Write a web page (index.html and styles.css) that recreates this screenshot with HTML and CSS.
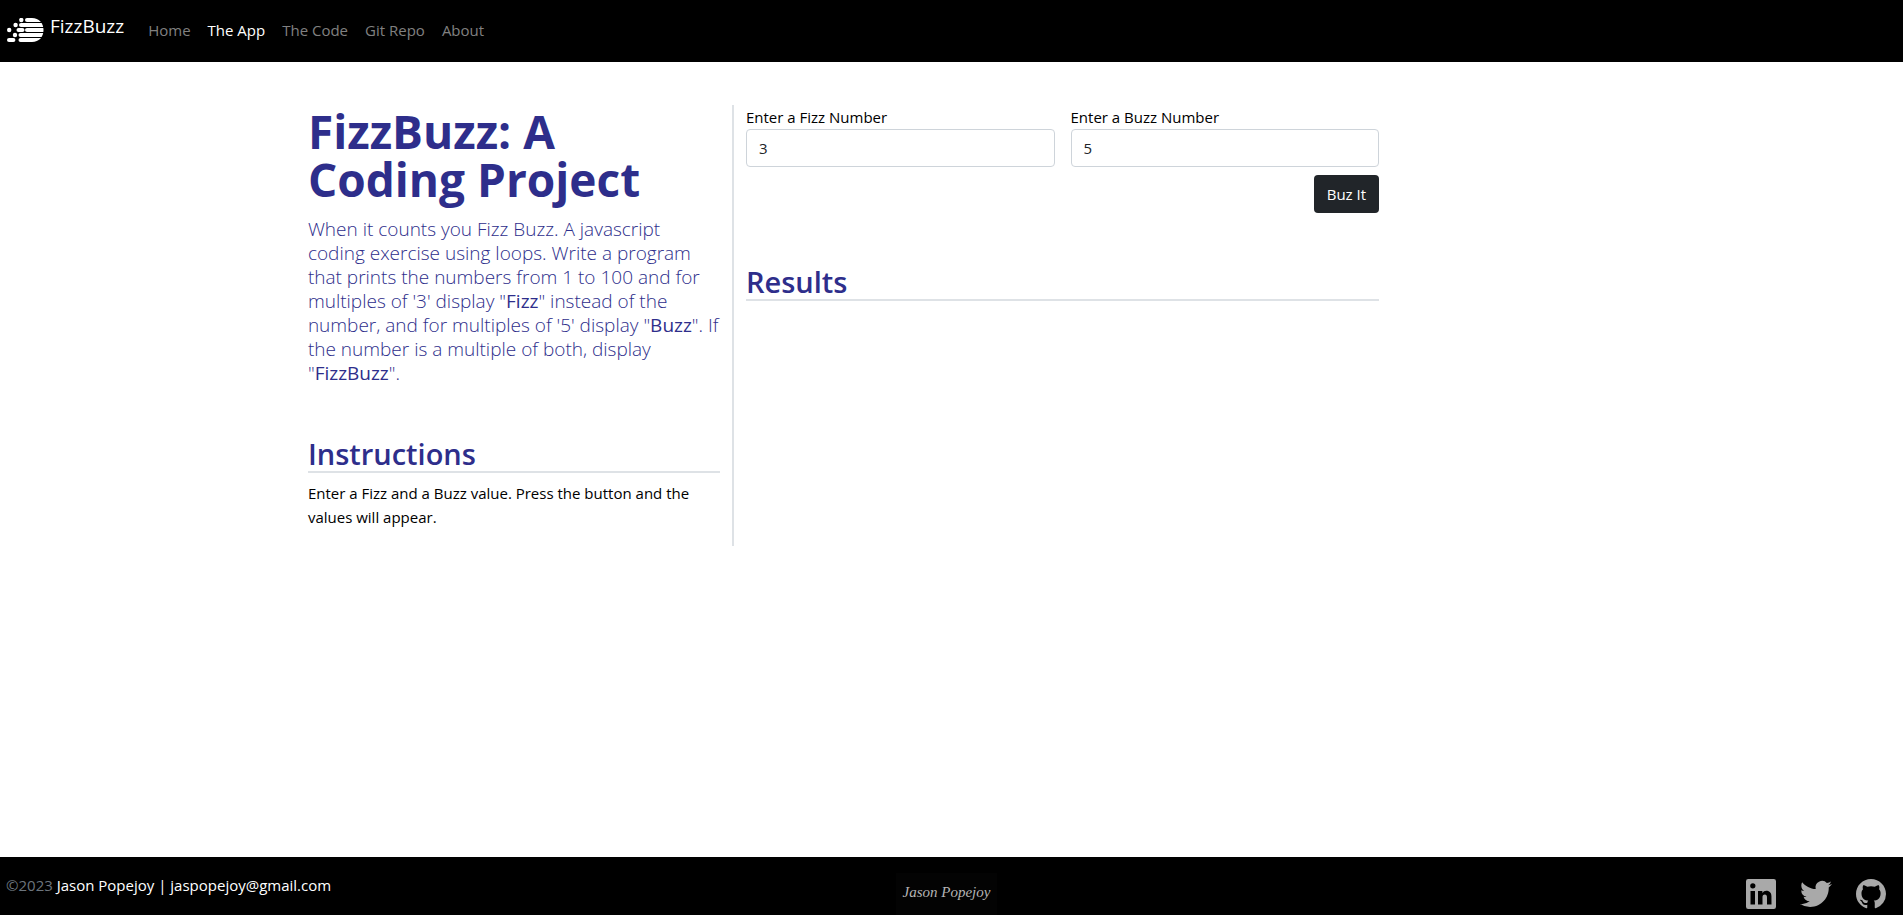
FILE: index.html
```html
<!DOCTYPE html>
<html lang="en">
<head>
<meta charset="utf-8">
<meta name="viewport" content="width=device-width, initial-scale=1">
<title>FizzBuzz</title>
<link rel="stylesheet" href="styles.css">
</head>
<body>
<header class="navbar">
  <a class="brand" href="#">
    <svg class="brand-logo" viewBox="0 0 37 24" aria-hidden="true">
      <clipPath id="logo-shape"><path d="M0 0H25C32 0 36.500 5 36.500 12S32 24 25 24H0Z"/></clipPath>
      <g clip-path="url(#logo-shape)" fill="#fff">
        <circle cx="14.300" cy="2" r="2.200"/><rect x="18" y="0" width="22" height="4" rx="2"/>
        <circle cx="8.600" cy="7" r="2.200"/><rect x="12" y="5" width="28" height="4" rx="2"/>
        <circle cx="2.200" cy="12" r="2.200"/><rect x="9.500" y="10" width="8" height="4" rx="2"/><rect x="18" y="10" width="22" height="4" rx="2"/>
        <circle cx="8" cy="17" r="2.200"/><rect x="11.500" y="15" width="28" height="4" rx="2"/>
        <rect x="0" y="20" width="8.400" height="4" rx="2"/><rect x="11.500" y="20" width="28" height="4" rx="2"/>
      </g>
    </svg>
    <span class="brand-name">FizzBuzz</span>
  </a>
  <nav class="nav">
    <a class="nav-link" href="#">Home</a>
    <a class="nav-link active" href="#" aria-current="page">The App</a>
    <a class="nav-link" href="#">The Code</a>
    <a class="nav-link" href="#">Git Repo</a>
    <a class="nav-link" href="#">About</a>
  </nav>
</header>

<main class="content">
  <section class="intro">
    <h1 class="title">FizzBuzz: A Coding Project</h1>
    <p class="lead">When it counts you Fizz Buzz. A javascript coding exercise using loops. Write a program that prints the numbers from 1 to 100 and for multiples of '3' display "<b>Fizz</b>" instead of the number, and for multiples of '5' display "<b>Buzz</b>". If the number is a multiple of both, display "<b>FizzBuzz</b>".</p>
    <h2 class="section-title">Instructions</h2>
    <p class="text">Enter a Fizz and a Buzz value. Press the button and the values will appear.</p>
  </section>
  <section class="app">
    <form class="form">
      <div class="field">
        <label for="fizz">Enter a Fizz Number</label>
        <input class="input" id="fizz" type="text" value="3">
      </div>
      <div class="field">
        <label for="buzz">Enter a Buzz Number</label>
        <input class="input" id="buzz" type="text" value="5">
      </div>
      <button class="button" type="button">Buz It</button>
    </form>
    <h2 class="section-title">Results</h2>
  </section>
</main>

<footer class="footer">
  <p class="copyright">©2023 <span class="owner">Jason Popejoy | jaspopejoy@gmail.com</span></p>
  <p class="signature">Jason Popejoy</p>
  <div class="social">
    <a class="social-link" href="#" aria-label="LinkedIn"><svg viewBox="1.500 2 21 20"><path d="M20.500 2h-17A1.500 1.500 0 002 3.500v17A1.500 1.500 0 003.500 22h17a1.500 1.500 0 001.500-1.500v-17A1.500 1.500 0 0020.500 2zM8 19H5v-9h3zM6.500 8.250A1.750 1.750 0 118.300 6.500a1.780 1.780 0 01-1.800 1.750zM19 19h-3v-4.740c0-1.420-.6-1.930-1.380-1.930A1.740 1.740 0 0013 14.190V19h-3v-9h2.900v1.300a3.110 3.110 0 012.700-1.400c1.550 0 3.360.86 3.360 3.660z"/></svg></a>
    <a class="social-link" href="#" aria-label="Twitter"><svg viewBox="0 2 24 20"><path d="M23.953 4.570a10 10 0 01-2.825.775 4.958 4.958 0 002.163-2.723c-.951.555-2.005.959-3.127 1.184a4.920 4.920 0 00-8.384 4.482C7.690 8.095 4.067 6.130 1.640 3.162a4.822 4.822 0 00-.666 2.475c0 1.710.87 3.213 2.188 4.096a4.904 4.904 0 01-2.228-.616v.06a4.923 4.923 0 003.946 4.827 4.996 4.996 0 01-2.212.085 4.936 4.936 0 004.604 3.417 9.867 9.867 0 01-6.102 2.105c-.39 0-.779-.023-1.170-.067a13.995 13.995 0 007.557 2.209c9.053 0 13.998-7.496 13.998-13.985 0-.21 0-.42-.015-.63A9.935 9.935 0 0024 4.590z"/></svg></a>
    <a class="social-link" href="#" aria-label="GitHub"><svg viewBox="0 0 16 16"><path d="M8 0C3.580 0 0 3.580 0 8c0 3.540 2.290 6.530 5.470 7.590.4.070.55-.17.55-.38 0-.19-.01-.82-.01-1.490-2.010.37-2.530-.49-2.690-.94-.09-.23-.48-.94-.82-1.130-.28-.15-.68-.52-.01-.53.63-.01 1.080.58 1.230.82.72 1.210 1.870.87 2.330.66.07-.52.28-.87.51-1.070-1.780-.2-3.640-.89-3.640-3.950 0-.87.31-1.590.82-2.150-.08-.2-.36-1.020.08-2.120 0 0 .67-.21 2.200.82.64-.18 1.320-.27 2-.27s1.360.09 2 .27c1.530-1.040 2.200-.82 2.200-.82.44 1.100.16 1.920.08 2.120.51.56.82 1.270.82 2.150 0 3.070-1.870 3.750-3.650 3.950.29.25.54.73.54 1.480 0 1.070-.01 1.930-.01 2.200 0 .21.15.46.55.38A8.010 8.010 0 0016 8c0-4.420-3.580-8-8-8z"/></svg></a>
  </div>
</footer>
</body>
</html>
```
FILE: styles.css
```css
* {
  box-sizing: border-box;
}

body {
  margin: 0;
  min-height: 100vh;
  display: flex;
  flex-direction: column;
  background: #fff;
  color: #000;
  font: 15px/24px "Open Sans", "Noto Sans", sans-serif;
}

h1,
h2,
p {
  margin: 0;
}

a {
  text-decoration: none;
}

.navbar {
  display: flex;
  align-items: center;
  gap: 16px;
  height: 62px;
  padding: 0 7px 2px;
  background: #000;
}

.brand {
  display: flex;
  gap: 6px;
  color: #fff;
  font-size: 19px;
}

.brand-logo {
  width: 37px;
  height: 24px;
}

.brand-name {
  line-height: 16px;
}

.nav {
  display: flex;
  gap: 1px;
}

.nav-link {
  padding: 0 8px;
  color: #808080;
}

.nav-link.active {
  color: #fff;
}

.content {
  flex: 1;
  display: grid;
  grid-template-columns: 2fr 3fr;
  align-items: start;
  width: 57.550%;
  margin: 43px 0 24px 15.550%;
}

.intro {
  padding: 2px 12px 17px;
  border-right: 2px solid #dee2e6;
}

.title {
  color: #2e2e8b;
  font-size: 46px;
  line-height: 48px;
  font-weight: 700;
}

.lead {
  margin-top: 14px;
  color: #2e2e8b;
  font-size: 19px;
  font-weight: 300;
}

.lead b {
  font-weight: 500;
}

.section-title {
  margin-top: 52px;
  border-bottom: 2px solid #dee2e6;
  color: #2e2e8b;
  font-size: 29px;
  line-height: 34px;
  font-weight: 600;
}

.text {
  margin-top: 8px;
}

.app {
  padding: 0 12px;
}

.form {
  display: grid;
  grid-template-columns: 1fr 1fr;
  gap: 8px 16px;
}

.field {
  display: flex;
  flex-direction: column;
}

.input {
  width: 100%;
  height: 38px;
  padding: 6px 12px;
  border: 1px solid #ced4da;
  border-radius: 4px;
  background: #fff;
  color: #212529;
  font: inherit;
}

.button {
  grid-column: 2;
  justify-self: end;
  height: 38px;
  padding: 0 13px;
  border: 0;
  border-radius: 4px;
  background: #212529;
  color: #fff;
  font: inherit;
}

.footer {
  display: grid;
  grid-template-columns: 1fr auto 1fr;
  height: 58px;
  padding: 16px 16px 0 6px;
  background: #000;
}

.copyright {
  color: #6c757d;
}

.owner {
  color: #fff;
}

.signature {
  padding: 0 7px;
  background: #030303;
  color: #b4b4b4;
  font: italic 15px/38px "Liberation Serif", serif;
}

.social {
  display: flex;
  justify-content: flex-end;
  align-items: center;
  gap: 23px;
  height: 42px;
}

.social-link {
  display: flex;
}

.social-link svg {
  width: 32px;
  height: 30px;
  fill: #a9a9a9;
}
```
